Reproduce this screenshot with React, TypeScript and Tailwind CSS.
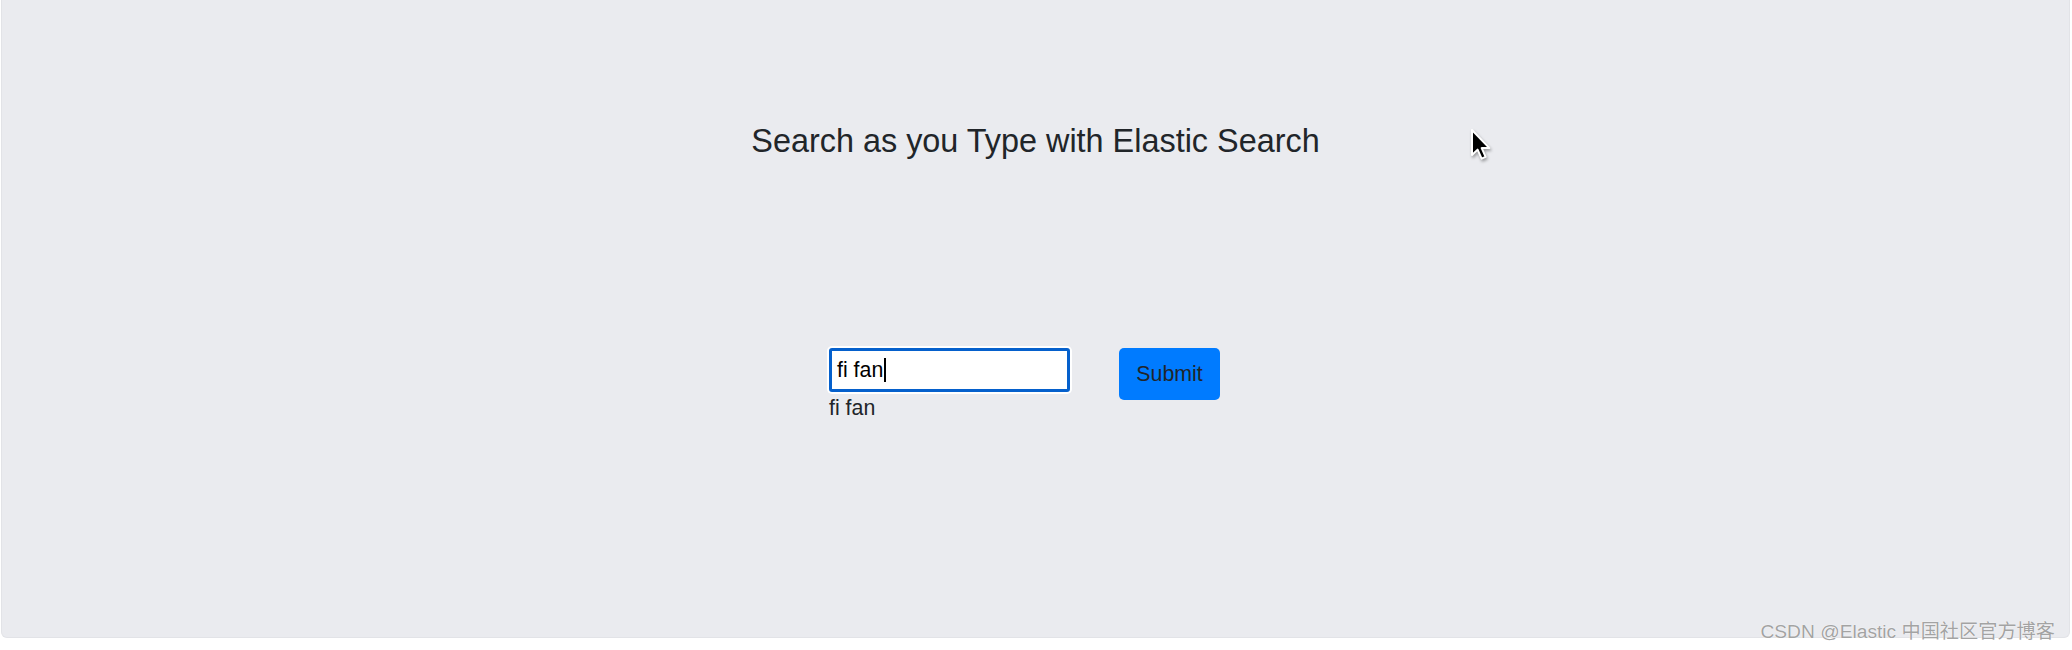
import React from "react";

function Cursor() {
  return (
    <svg
      className="absolute left-[1466px] top-[124px]"
      width="30"
      height="42"
      viewBox="0 0 30 42"
      style={{ filter: "drop-shadow(1px 2px 1.5px rgba(0,0,0,0.35))" }}
    >
      <path
        d="M6 6 L6 31 L11.6 25.6 L15.6 34.6 L19.6 32.9 L15.7 24.1 L23.4 24.1 Z"
        fill="#000"
        stroke="#fff"
        strokeWidth="2"
        strokeLinejoin="round"
      />
    </svg>
  );
}

export default function App() {
  const font = { fontFamily: '"Liberation Sans", Arial, sans-serif' };
  return (
    <div className="relative w-full h-[650px] bg-white overflow-hidden" style={font}>
      <div className="ml-px mr-[2px] h-[638px] bg-[#eaebef] border-x border-b border-[#e2e3e7] rounded-b-[6px]">
        <h1 className="pt-[123px] text-center text-[32.4px] leading-[37px] text-[#212529] font-normal">
          Search as you Type with Elastic Search
        </h1>
        <div className="mt-[188px] ml-[827px] flex items-start">
          <div className="flex flex-col">
            <div className="w-[241px] h-[44px] bg-white border-[3px] border-[#0560cc] rounded-[3px] shadow-[0_0_0_2px_#ffffff] flex items-center pl-[5px]">
              <span className="text-[21.33px] leading-[24px] text-black">fi fan</span>
              <span className="w-[1.5px] h-[24px] bg-black ml-[1px]" />
            </div>
            <div className="mt-[4px] text-[21.33px] leading-[24px] text-[#212529]">fi fan</div>
          </div>
          <button className="ml-[49px] w-[101px] h-[52px] bg-[#007bff] rounded-[5px] text-[21.33px] leading-[24px] text-[#212529]">
            Submit
          </button>
        </div>
      </div>
      <div
        className="absolute top-[621px] right-[17px] text-[19.2px] leading-[22px] text-[#a3a3a3] whitespace-nowrap"
        style={{
          fontFamily: '"Liberation Sans", "Noto Sans CJK SC", sans-serif',
          textShadow: "0 0 1px #fff, 0 0 1px #fff",
        }}
      >
        CSDN @Elastic 中国社区官方博客
      </div>
      <Cursor />
    </div>
  );
}
